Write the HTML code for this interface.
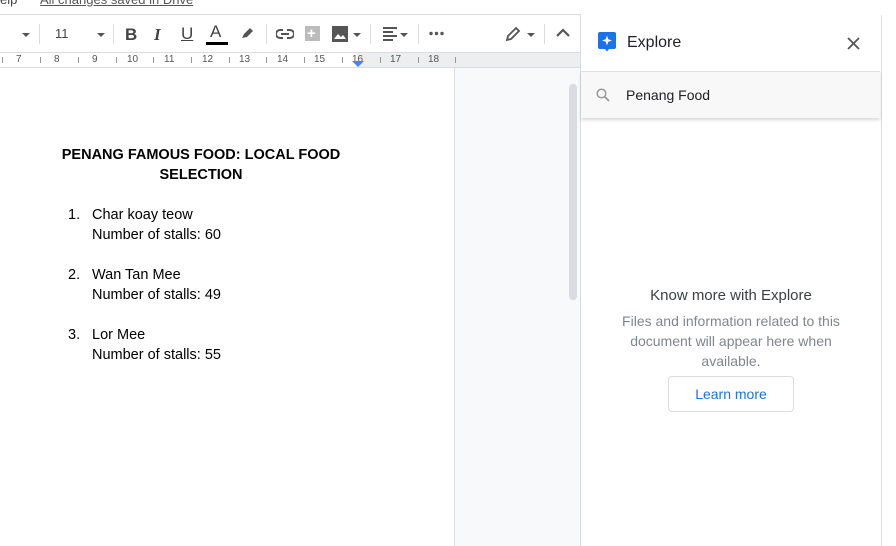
<!DOCTYPE html>
<html><head><style>
*{margin:0;padding:0;box-sizing:border-box}
body{width:896px;height:546px;overflow:hidden;background:#fff;font-family:"Liberation Sans",Arial,sans-serif;position:relative}
.a{position:absolute}
.tb{color:#444;font-size:17px}
.sep{position:absolute;top:24px;width:1px;height:20px;background:#dadce0}
.caret{position:absolute;width:0;height:0;border-left:4px solid transparent;border-right:4px solid transparent;border-top:4px solid #555}
.ruler span{position:absolute;top:1px;font-size:10px;color:#555}
.ruler i{position:absolute;top:4px;width:1px;height:6px;background:#999}
.doc{font-size:14.5px;color:#000}
</style></head><body>
<div class="a" style="left:0;top:-8px;font-size:13px;color:#444">elp</div>
<div class="a" style="left:40px;top:-8px;font-size:13px;color:#555;text-decoration:underline">All changes saved in Drive</div>
<div class="a" style="left:0;top:14px;width:581px;height:1px;background:#dadce0"></div>
<!-- toolbar -->
<div class="caret" style="left:22px;top:33px"></div>
<div class="sep" style="left:39px"></div>
<div class="a" style="left:55px;top:26px;font-size:13px;color:#444">11</div>
<div class="caret" style="left:97px;top:33px"></div>
<div class="sep" style="left:113px"></div>
<div class="a tb" style="left:125px;top:25px;font-weight:bold">B</div>
<div class="a tb" style="left:154px;top:25px;font-style:italic;font-family:'Liberation Serif',serif;font-weight:bold">I</div>
<div class="a tb" style="left:181px;top:24px;text-decoration:underline">U</div>
<div class="a tb" style="left:210px;top:22px">A</div>
<div class="a" style="left:206px;top:42px;width:22px;height:3px;background:#000"></div>
<svg class="a" style="left:239px;top:25px" width="16" height="16" viewBox="0 0 16 16"><path d="M3 13 L5 9 L11 3 L14 6 L8 12 Z" fill="#555"/></svg>
<div class="sep" style="left:266px"></div>
<svg class="a" style="left:276px;top:27px" width="18" height="14" viewBox="0 0 18 14"><path d="M7 3H4a4 4 0 000 8h3M11 3h3a4 4 0 010 8h-3M5 7h8" stroke="#555" stroke-width="2" fill="none"/></svg>
<div class="a" style="left:305px;top:26px;width:15px;height:15px;background:#bbb"></div>
<div class="a" style="left:307px;top:25px;color:#fff;font-size:15px;font-weight:bold">+</div>
<div class="a" style="left:332px;top:26px;width:16px;height:16px;background:#555"></div>
<svg class="a" style="left:334px;top:31px" width="12" height="8"><path d="M0 8L4 3L7 6L9 4L12 8Z" fill="#fff"/></svg>
<div class="caret" style="left:353px;top:33px"></div>
<div class="sep" style="left:370px"></div>
<svg class="a" style="left:383px;top:27px" width="16" height="14"><path d="M0 1h14M0 5h10M0 9h14M0 13h10" stroke="#555" stroke-width="2"/></svg>
<div class="caret" style="left:400px;top:33px"></div>
<div class="sep" style="left:418px"></div>
<svg class="a" style="left:429px;top:31px" width="16" height="5"><circle cx="2" cy="2.5" r="1.7" fill="#555"/><circle cx="7.5" cy="2.5" r="1.7" fill="#555"/><circle cx="13" cy="2.5" r="1.7" fill="#555"/></svg>
<svg class="a" style="left:505px;top:26px" width="16" height="16"><path d="M2 14L3 10L11 2L14 5L6 13Z" stroke="#555" stroke-width="1.8" fill="none"/></svg>
<div class="caret" style="left:527px;top:33px"></div>
<div class="sep" style="left:544px"></div>
<svg class="a" style="left:556px;top:28px" width="14" height="10"><path d="M1 8L7 2L13 8" stroke="#555" stroke-width="2.2" fill="none"/></svg>
<!-- ruler -->
<div class="a" style="left:0;top:52px;width:581px;height:1px;background:#dadce0"></div>
<div class="a ruler" style="left:0;top:53px;width:581px;height:14px;background:#fff">
<div class="a" style="left:357px;top:0;width:224px;height:14px;background:#eceef0"></div>
<i style="left:2px"></i><i style="left:40px"></i><i style="left:78px"></i><i style="left:116px"></i><i style="left:153px"></i><i style="left:191px"></i><i style="left:229px"></i><i style="left:266px"></i><i style="left:304px"></i><i style="left:342px"></i><i style="left:380px"></i><i style="left:418px"></i><i style="left:455px"></i>
<span style="left:16px">7</span><span style="left:54px">8</span><span style="left:92px">9</span><span style="left:127px">10</span><span style="left:164px">11</span><span style="left:202px">12</span><span style="left:239px">13</span><span style="left:277px">14</span><span style="left:314px">15</span><span style="left:352px">16</span><span style="left:390px">17</span><span style="left:428px">18</span>
</div>
<div class="a" style="left:352px;top:61px;width:0;height:0;border-left:6px solid transparent;border-right:6px solid transparent;border-top:6px solid #4285f4"></div>
<div class="a" style="left:0;top:67px;width:581px;height:1px;background:#dadce0"></div>
<!-- gray side -->
<div class="a" style="left:454px;top:68px;width:127px;height:478px;background:#f8f9fa;border-left:1px solid #e0e0e0"></div>
<div class="a" style="left:569px;top:84px;width:8px;height:216px;background:#dadce0;border-radius:4px"></div>
<!-- doc -->
<div class="a doc" style="left:40px;top:145px;width:322px;text-align:center;font-weight:bold;line-height:20px">PENANG FAMOUS FOOD: LOCAL FOOD SELECTION</div>
<div class="a doc" style="left:68px;top:205px;line-height:20px">1.</div>
<div class="a doc" style="left:92px;top:205px;line-height:20px">Char koay teow<br>Number of stalls: 60</div>
<div class="a doc" style="left:68px;top:265px;line-height:20px">2.</div>
<div class="a doc" style="left:92px;top:265px;line-height:20px">Wan Tan Mee<br>Number of stalls: 49</div>
<div class="a doc" style="left:68px;top:325px;line-height:20px">3.</div>
<div class="a doc" style="left:92px;top:325px;line-height:20px">Lor Mee<br>Number of stalls: 55</div>
<!-- explore -->
<div class="a" style="left:580px;top:15px;width:302px;height:531px;background:#fff;border-left:1px solid #dadce0;border-right:1px solid #dadce0"></div>
<svg class="a" style="left:598px;top:32px" width="18" height="20" viewBox="0 0 18 20"><path d="M2 0h14a2 2 0 012 2v13a2 2 0 01-2 2h-5l-2 2.5-2-2.5H2a2 2 0 01-2-2V2a2 2 0 012-2z" fill="#1a73e8"/><path d="M9 3.5L10.3 7.2L14 8.5L10.3 9.8L9 13.5L7.7 9.8L4 8.5L7.7 7.2Z" fill="#fff"/></svg>
<div class="a" style="left:627px;top:34px;font-size:16px;color:#202124">Explore</div>
<svg class="a" style="left:847px;top:37px" width="13" height="13"><path d="M1 1L12 12M12 1L1 12" stroke="#555" stroke-width="1.8"/></svg>
<div class="a" style="left:581px;top:71px;width:299px;height:47px;background:#f8f8f8;border-top:1px solid #e0e0e0;box-shadow:0 2px 3px rgba(0,0,0,.15)"></div>
<svg class="a" style="left:596px;top:88px" width="14" height="14"><circle cx="5.5" cy="5.5" r="4.3" stroke="#999" stroke-width="1.5" fill="none"/><path d="M8.6 8.6L13 13" stroke="#999" stroke-width="1.8"/></svg>
<div class="a" style="left:626px;top:87px;font-size:14px;color:#202124">Penang Food</div>
<div class="a" style="left:581px;top:287px;width:300px;text-align:center;font-size:15px;color:#3c4043">Know more with Explore</div>
<div class="a" style="left:611px;top:311px;width:240px;text-align:center;font-size:14px;line-height:20px;color:#80868b">Files and information related to this document will appear here when available.</div>
<div class="a" style="left:668px;top:376px;width:126px;height:36px;border:1px solid #dadce0;border-radius:4px;text-align:center;line-height:34px;font-size:14px;color:#1a73e8">Learn more</div>
</body></html>
